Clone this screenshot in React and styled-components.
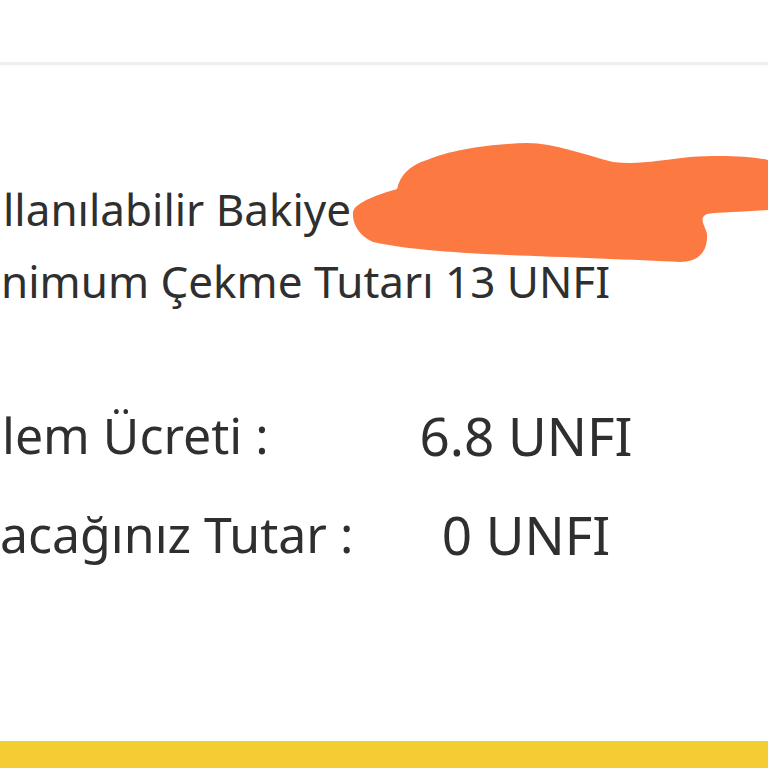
import React from 'react';
import styled, { createGlobalStyle } from 'styled-components';

const GlobalStyle = createGlobalStyle`
  html, body {
    margin: 0;
    padding: 0;
    background: #ffffff;
  }
  body {
    font-family: 'Noto Sans', 'Open Sans', sans-serif;
    color: #2f2f2f;
  }
`;

// styled components
const Page = styled.div`
  position: relative;
  display: flex;
  flex-direction: column;
  min-height: 768px;
  width: 768px;
  overflow: hidden;
  background: #fff;
`;

const Header = styled.div`
  height: 62px;
  border-bottom: 3px solid #efefef;
  box-shadow: 0 1px 2px rgba(0, 0, 0, 0.03);
`;

const Content = styled.div`
  display: flex;
  flex-direction: column;
  padding-top: 108px;
`;

const InfoLine = styled.div`
  font-size: 44px;
  line-height: 72px;
  white-space: nowrap;
  padding-left: ${(p) => p.indent || 0}px;
`;

const Summary = styled.div`
  display: grid;
  grid-template-columns: 360px 332px;
  margin-top: 69px;
`;

const Label = styled.div`
  font-size: 50px;
  line-height: 99px;
  white-space: nowrap;
  padding-left: ${(p) => p.indent || 0}px;
`;

const Value = styled.div`
  font-size: 53px;
  line-height: 99px;
  white-space: nowrap;
  text-align: center;
`;

const Spacer = styled.div`
  flex: 1;
`;

const YellowBar = styled.div`
  height: 27px;
  background: linear-gradient(#f2cf33, #f6cb34);
`;

const Scribble = styled.svg`
  position: absolute;
  left: 340px;
  top: 130px;
  width: 428px;
  height: 140px;
`;

const Redaction = () => (
  <Scribble viewBox="0 0 428 140">
    <path
      fill="#fc7a42"
      d="M13,82 C15,72 40,64 57,59 C60,45 70,35 87,30 C110,20 150,14 187,13 C215,13 245,25 273,32 C300,35 320,30 350,27 C380,25 410,26 428,30 L428,80 C405,82 380,82 367,84 C358,88 365,95 367,104 C368,122 358,132 340,132 C300,130 220,127 167,125 C120,123 70,120 33,112 C20,106 12,95 13,82 Z"
    />
  </Scribble>
);

const App = () => {
  const rows = [
    { label: 'lem Ücreti :', value: '6.8 UNFI', indent: 2 },
    { label: 'acağınız Tutar :', value: '0 UNFI', indent: 0 },
  ];

  return (
    <Page>
      <GlobalStyle />
      <Header />
      <Content>
        <InfoLine indent={3}>llanılabilir Bakiye</InfoLine>
        <InfoLine indent={1}>nimum Çekme Tutarı 13 UNFI</InfoLine>
        <Summary>
          {rows.map((row) => (
            <React.Fragment key={row.value}>
              <Label indent={row.indent}>{row.label}</Label>
              <Value>{row.value}</Value>
            </React.Fragment>
          ))}
        </Summary>
      </Content>
      <Spacer />
      <YellowBar />
      <Redaction />
    </Page>
  );
};

export default App;
